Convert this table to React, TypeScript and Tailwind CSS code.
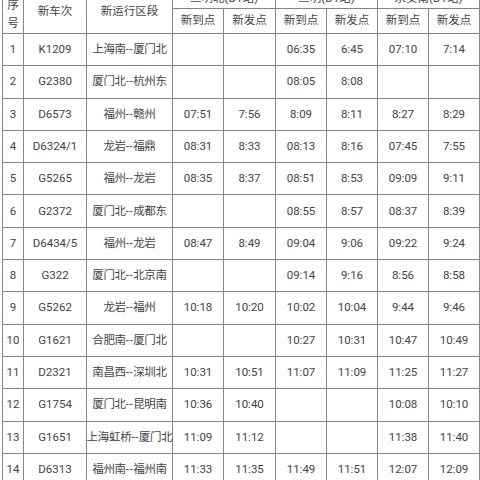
import React from "react";

const rows: string[][] = [
  ["1", "K1209", "上海南--厦门北", "", "", "06:35", "6:45", "07:10", "7:14"],
  ["2", "G2380", "厦门北--杭州东", "", "", "08:05", "8:08", "", ""],
  ["3", "D6573", "福州--赣州", "07:51", "7:56", "8:09", "8:11", "8:27", "8:29"],
  ["4", "D6324/1", "龙岩--福鼎", "08:31", "8:33", "08:13", "8:16", "07:45", "7:55"],
  ["5", "G5265", "福州--龙岩", "08:35", "8:37", "08:51", "8:53", "09:09", "9:11"],
  ["6", "G2372", "厦门北--成都东", "", "", "08:55", "8:57", "08:37", "8:39"],
  ["7", "D6434/5", "福州--龙岩", "08:47", "8:49", "09:04", "9:06", "09:22", "9:24"],
  ["8", "G322", "厦门北--北京南", "", "", "09:14", "9:16", "8:56", "8:58"],
  ["9", "G5262", "龙岩--福州", "10:18", "10:20", "10:02", "10:04", "9:44", "9:46"],
  ["10", "G1621", "合肥南--厦门北", "", "", "10:27", "10:31", "10:47", "10:49"],
  ["11", "D2321", "南昌西--深圳北", "10:31", "10:51", "11:07", "11:09", "11:25", "11:27"],
  ["12", "G1754", "厦门北--昆明南", "10:36", "10:40", "", "", "10:08", "10:10"],
  ["13", "G1651", "上海虹桥--厦门北", "11:09", "11:12", "", "", "11:38", "11:40"],
  ["14", "D6313", "福州南--福州南", "11:33", "11:35", "11:49", "11:51", "12:07", "12:09"],
];

function Route({ text }: { text: string }) {
  const [a, b] = text.split("--");
  return (
    <span className="tracking-[-0.3px]">
      {a}
      <span className="tracking-[0.5px]">--</span>
      {b}
    </span>
  );
}

export default function App() {
  return (
    <div
      className="w-[480px] h-[480px] overflow-hidden bg-white text-[#444444] text-[11.5px]"
      style={{ fontFamily: 'Roboto, "Noto Sans CJK SC", sans-serif' }}
    >
      <div className="ml-[2px] -mt-[12px] w-[478px] border border-[#858585] bg-[#858585] grid gap-px grid-cols-[20px_62px_85px_50px_51px_50px_50px_50px_50px] grid-rows-[19px_24px_repeat(14,31.3px)]">
        <div className="row-span-2 bg-white flex items-center justify-center text-center leading-[18px] pt-[5px]">
          序<br />号
        </div>
        <div className="row-span-2 bg-white flex items-center justify-center pt-[2px]">新车次</div>
        <div className="row-span-2 bg-white flex items-center justify-center pt-[2px]">新运行区段</div>
        <div className="col-span-2 bg-white flex items-center justify-center">三明北(D1站)</div>
        <div className="col-span-2 bg-white flex items-center justify-center">三明(D1站)</div>
        <div className="col-span-2 bg-white flex items-center justify-center">永安南(D1站)</div>
        {["新到点", "新发点", "新到点", "新发点", "新到点", "新发点"].map((t, i) => (
          <div key={i} className="bg-white flex items-center justify-center">
            {t}
          </div>
        ))}
        {rows.map((r, ri) =>
          r.map((c, ci) => (
            <div
              key={ri + "-" + ci}
              className="bg-white flex items-center justify-center whitespace-nowrap"
            >
              {ci === 2 ? <Route text={c} /> : c}
            </div>
          ))
        )}
      </div>
    </div>
  );
}
